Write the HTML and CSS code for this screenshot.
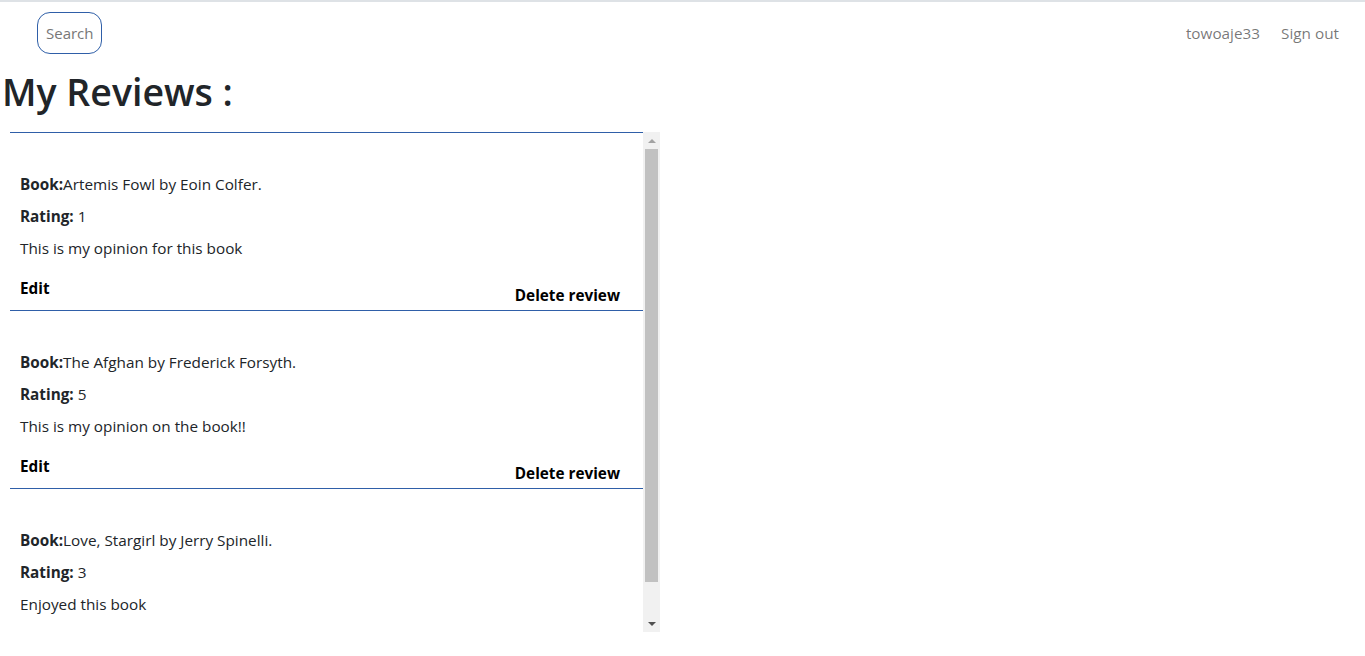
FILE: index.html
```html
<!DOCTYPE html>
<html lang="en">
<head>
<meta charset="utf-8">
<title>My Reviews</title>
<link rel="stylesheet" href="styles.css">
</head>
<body>
<nav class="navbar">
  <div class="search-wrap">
    <input class="search" type="text" placeholder="Search">
  </div>
  <div class="nav-links">
    <a class="nav-link" href="#">towoaje33</a>
    <a class="nav-link" href="#">Sign out</a>
  </div>
</nav>
<h1 class="title">My Reviews :</h1>
<div class="scroll-box">
  <div class="reviews">
    <div class="review">
      <p><b>Book:</b>Artemis Fowl by Eoin Colfer.</p>
      <p><b>Rating:</b> 1</p>
      <p>This is my opinion for this book</p>
      <div class="actions">
        <a class="edit" href="#">Edit</a>
        <a class="delete" href="#">Delete review</a>
      </div>
    </div>
    <div class="review">
      <p><b>Book:</b>The Afghan by Frederick Forsyth.</p>
      <p><b>Rating:</b> 5</p>
      <p>This is my opinion on the book!!</p>
      <div class="actions">
        <a class="edit" href="#">Edit</a>
        <a class="delete" href="#">Delete review</a>
      </div>
    </div>
    <div class="review">
      <p><b>Book:</b>Love, Stargirl by Jerry Spinelli.</p>
      <p><b>Rating:</b> 3</p>
      <p>Enjoyed this book</p>
    </div>
  </div>
  <div class="scrollbar" aria-hidden="true">
    <div class="sb-btn">
      <svg width="8" height="4" viewBox="0 0 8 4"><polygon points="0,4 8,4 4,0" fill="#a3a3a3"/></svg>
    </div>
    <div class="sb-track">
      <div class="sb-thumb"></div>
    </div>
    <div class="sb-btn">
      <svg width="8" height="4" viewBox="0 0 8 4"><polygon points="0,0 8,0 4,4" fill="#505050"/></svg>
    </div>
  </div>
</div>
</body>
</html>
```
FILE: styles.css
```css
html, body {
  margin: 0;
  padding: 0;
}
body {
  font-family: "Open Sans", "Noto Sans", sans-serif;
  font-size: 15.3px;
  line-height: 24px;
  color: #212529;
  background: #fff;
  border-top: 2px solid #dee2e6;
}
.navbar {
  display: flex;
  justify-content: space-between;
  align-items: center;
  padding: 10px 26px 0 37px;
  height: 42px;
}
.search {
  box-sizing: border-box;
  width: 65px;
  height: 42px;
  border: 1px solid #2f5fa8;
  border-radius: 13px;
  padding: 0 8px;
  font: inherit;
  font-size: 15px;
  color: #6c757d;
  outline: none;
}
.search::placeholder {
  color: #777;
}
.nav-links {
  display: flex;
  gap: 21px;
}
.nav-link {
  color: rgba(0, 0, 0, 0.55);
  text-decoration: none;
}
.title {
  margin: 14px 0 16px 2px;
  font-size: 37.5px;
  font-weight: 600;
  line-height: 48px;
  color: #212529;
}
.scroll-box {
  display: flex;
  margin-left: 10px;
  width: 650px;
  height: 500px;
}
.reviews {
  flex: 1;
  overflow: hidden;
}
.scrollbar {
  width: 17px;
  flex: none;
  background: #f1f1f1;
  display: flex;
  flex-direction: column;
}
.sb-btn {
  height: 17px;
  display: flex;
  align-items: center;
  justify-content: center;
  padding-left: 1px;
}
.sb-btn svg {
  display: block;
}
.sb-track {
  flex: 1;
  padding: 0 2px 0 2px;
}
.sb-thumb {
  height: 433px;
  background: #c1c1c1;
}
.review {
  border-top: 1px solid #2f5fa8;
  padding: 39px 23px 3px 10px;
}
.review p {
  margin: 0 0 8px;
}
.review p:nth-of-type(3) {
  margin-bottom: 16px;
}
.actions {
  display: flex;
  justify-content: space-between;
  align-items: flex-start;
}
.edit, .delete {
  color: #000;
  font-weight: 700;
  text-decoration: none;
}
.delete {
  margin-top: 7px;
}
```
